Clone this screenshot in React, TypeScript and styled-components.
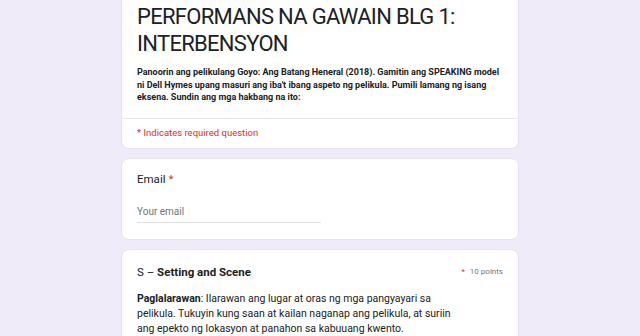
import React from 'react';
import styled, { createGlobalStyle } from 'styled-components';

const GlobalStyle = createGlobalStyle`
  body {
    margin: 0;
    background: #efebf8;
    font-family: Roboto, "Liberation Sans", Arial, sans-serif;
    color: #202124;
  }
`;

const Page = styled.div`
  width: 398px;
  margin: 0 auto;
  display: flex;
  flex-direction: column;
  gap: 9px;
  padding-bottom: 20px;
`;

const Card = styled.div<{ $top?: boolean }>`
  background: #fff;
  border-radius: ${(p) => (p.$top ? '0 0 8px 8px' : '8px')};
  border: 1px solid #e6e2ee;
  border-top: ${(p) => (p.$top ? 'none' : '1px solid #e6e2ee')};
`;

const Section = styled.div<{ $pad: string }>`
  padding: ${(p) => p.$pad};
`;

const Title = styled.h1`
  margin: 0;
  font-family: Roboto, "Open Sans", sans-serif;
  font-weight: 400;
  font-size: 22px;
  line-height: 27px;
  letter-spacing: -0.7px;
  color: #202124;
`;

const Description = styled.p`
  margin: 9px 0 0;
  font-size: 9px;
  font-weight: 700;
  line-height: 12.5px;
  color: #202124;
`;

const Divider = styled.div`
  height: 1px;
  background: #e6e6e6;
`;

const Required = styled.div`
  font-size: 9.5px;
  color: #d93025;
`;

const Label = styled.div`
  font-size: 11.5px;
  color: #202124;
  display: flex;
  align-items: baseline;
`;

const Star = styled.span`
  color: #d93025;
  margin-left: 3px;
`;

const Input = styled.div`
  margin-top: 20px;
  width: 184px;
  padding-bottom: 5px;
  border-bottom: 1px solid #e0e0e0;
  font-size: 10px;
  color: #70757a;
`;

const QuestionHead = styled.div`
  display: flex;
  justify-content: space-between;
  align-items: center;
`;

const Points = styled.div`
  font-size: 8px;
  color: #70757a;
  display: flex;
  align-items: baseline;
  gap: 5px;
`;

const Body = styled.p`
  margin: 12px 0 0;
  width: 324px;
  font-size: 10.5px;
  line-height: 15px;
  color: #202124;
`;

export default function App() {
  return (
    <>
      <GlobalStyle />
      <Page>
        <Card $top>
          <Section $pad="3px 15px 14px">
            <Title>PERFORMANS NA GAWAIN BLG 1: INTERBENSYON</Title>
            <Description>
              Panoorin ang pelikulang Goyo: Ang Batang Heneral (2018). Gamitin ang SPEAKING model ni Dell
              Hymes upang masuri ang iba't ibang aspeto ng pelikula. Pumili lamang ng isang eksena.
              Sundin ang mga hakbang na ito:
            </Description>
          </Section>
          <Divider />
          <Section $pad="8px 15px 10px">
            <Required>* Indicates required question</Required>
          </Section>
        </Card>

        <Card>
          <Section $pad="13px 15px 16px">
            <Label>
              Email<Star>*</Star>
            </Label>
            <Input>Your email</Input>
          </Section>
        </Card>

        <Card>
          <Section $pad="15px 15px 14px">
            <QuestionHead>
              <Label>
                S –&nbsp;<strong>Setting and Scene</strong>
              </Label>
              <Points>
                <Star>*</Star>10 points
              </Points>
            </QuestionHead>
            <Body>
              <strong>Paglalarawan</strong>: Ilarawan ang lugar at oras ng mga pangyayari sa pelikula.
              Tukuyin kung saan at kailan naganap ang pelikula, at suriin ang epekto ng lokasyon at
              panahon sa kabuuang kwento.
            </Body>
          </Section>
        </Card>
      </Page>
    </>
  );
}
